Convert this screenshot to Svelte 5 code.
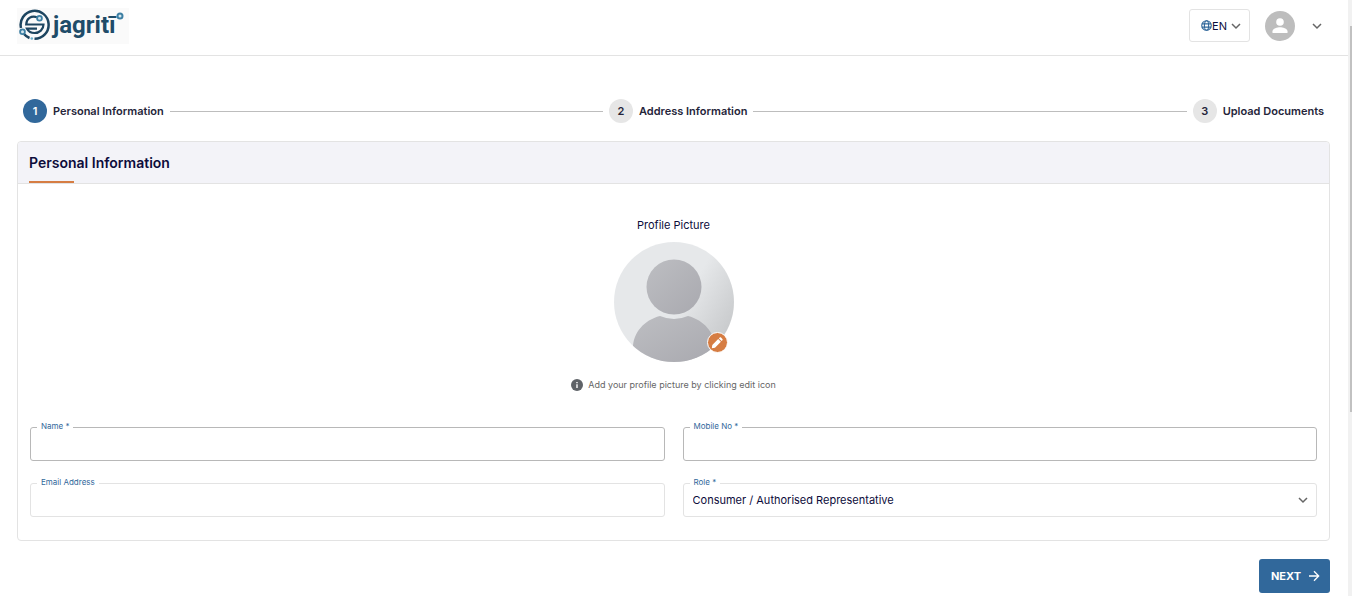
<script lang="ts">
  const steps = ["Personal Information", "Address Information", "Upload Documents"];
  const roles = ["Consumer / Authorised Representative", "Advocate", "Opposite Party"];

  let current: number = $state(0);
  let name: string = $state("");
  let mobile: string = $state("");
  let email: string = $state("");
  let role: string = $state(roles[0]);

  function next() {
    if (current < steps.length - 1) current += 1;
  }
</script>

{#snippet chevron()}
  <svg class="chevron" viewBox="0 0 10 10" aria-hidden="true">
    <path d="M1 3l4 4 4-4" fill="none" stroke="#666" stroke-width="1.5" />
  </svg>
{/snippet}

<div class="page">
  <header>
    <a class="logo" href="/">
      <svg class="mark" viewBox="0 0 32 32" aria-hidden="true">
        <g fill="none" stroke="#1d4560" stroke-width="2.5">
          <path d="M2 19A14 14 0 1 1 15.500 29.800" />
          <path d="M10.500 29A14 14 0 0 1 5 25" />
          <path d="M18 8.200C12 6.500 7.500 9.500 7.200 15.500H24.500c0 5-4 8.500-9 8.500-3.500 0-6-1.500-7.500-4.300H18" stroke-width="2.200" />
        </g>
        <circle cx="20.500" cy="9.200" r="2.400" fill="#d5e7ef" stroke="#3d7fa3" stroke-width="1.800" />
        <circle cx="3.500" cy="22.800" r="2.400" fill="#d5e7ef" stroke="#3d7fa3" stroke-width="1.800" />
        <circle cx="12.800" cy="29.500" r="1.300" fill="#6db3cf" />
      </svg>
      <span class="brand">jagritī</span>
      <svg class="dot" viewBox="0 0 8 8" aria-hidden="true">
        <circle cx="4" cy="4" r="2.500" fill="#d5e7ef" stroke="#3d7fa3" stroke-width="2" />
      </svg>
    </a>
    <div class="tools">
      <button class="lang" type="button">
        <svg class="globe" viewBox="0 0 12 12" aria-hidden="true">
          <g fill="none" stroke="#31689b" stroke-width="1.2">
            <circle cx="6" cy="6" r="5.200" />
            <ellipse cx="6" cy="6" rx="2.300" ry="5.200" />
            <path d="M1 4.200h10M1 7.800h10" />
          </g>
        </svg>
        <span>EN</span>
        {@render chevron()}
      </button>
      <button class="account" type="button" aria-label="Account">
        <svg class="avatar" viewBox="0 0 30 30" aria-hidden="true">
          <circle cx="15" cy="15" r="15" fill="#bdbdbd" />
          <circle cx="15" cy="11" r="3.800" fill="#fff" />
          <path d="M7.500 22v-1.800c0-2.500 5-3.900 7.500-3.900s7.500 1.400 7.500 3.900V22z" fill="#fff" />
        </svg>
        {@render chevron()}
      </button>
    </div>
  </header>

  <main>
    <ol class="stepper">
      {#each steps as step, i}
        {#if i > 0}
          <li class="line" aria-hidden="true"></li>
        {/if}
        <li class="step" class:active={i === current}>
          <span class="number">{i + 1}</span>
          <span class="step-label">{step}</span>
        </li>
      {/each}
    </ol>

    <form onsubmit={(e) => { e.preventDefault(); next(); }}>
      <section class="card">
        <h1><span>Personal Information</span></h1>
        <div class="body">
          <div class="profile">
            <p class="caption">Profile Picture</p>
            <div class="picture">
              <svg viewBox="0 0 120 120" aria-hidden="true">
                <defs>
                  <linearGradient id="back" x1="0" y1="0.200" x2="1" y2="0.800">
                    <stop offset="0.550" stop-color="#e6e8ea" />
                    <stop offset="1" stop-color="#c4c6c8" />
                  </linearGradient>
                  <linearGradient id="person" x1="0" y1="0" x2="1" y2="1">
                    <stop offset="0" stop-color="#bdbec2" />
                    <stop offset="1" stop-color="#a9a9af" />
                  </linearGradient>
                  <clipPath id="round"><circle cx="60" cy="60" r="60" /></clipPath>
                </defs>
                <circle cx="60" cy="60" r="60" fill="url(#back)" />
                <g clip-path="url(#round)" fill="url(#person)">
                  <circle cx="60" cy="45" r="27.500" />
                  <path d="M46 74C30 78 19 91 19 106v14h82v-14C101 91 90 78 74 74q-14 6-28 0z" />
                </g>
              </svg>
              <button class="edit" type="button" aria-label="Edit profile picture">
                <svg viewBox="0 0 14 14" aria-hidden="true">
                  <path d="M1.800 12.200l.5-3.200 5.900-5.900 2.700 2.700L5 11.700zM8.900 2.400l.8-.8c.4-.4.9-.4 1.300 0l1.400 1.400c.4.4.4.9 0 1.300l-.8.800z" fill="#fff" />
                </svg>
              </button>
            </div>
            <p class="hint">
              <svg viewBox="0 0 12 12" aria-hidden="true">
                <circle cx="6" cy="6" r="6" fill="#5f6368" />
                <path d="M5.300 5.200h1.400V9H5.300zM5.300 2.900h1.400v1.300H5.300z" fill="#fff" />
              </svg>
              Add your profile picture by clicking edit icon
            </p>
          </div>

          <div class="fields">
            <div class="field">
              <input id="name" type="text" bind:value={name} required />
              <label for="name">Name *</label>
            </div>
            <div class="field">
              <input id="mobile" type="tel" bind:value={mobile} required />
              <label for="mobile">Mobile No *</label>
            </div>
            <div class="field light">
              <input id="email" type="email" bind:value={email} />
              <label for="email">Email Address</label>
            </div>
            <div class="field light">
              <select id="role" bind:value={role}>
                {#each roles as r}
                  <option value={r}>{r}</option>
                {/each}
              </select>
              <label for="role">Role *</label>
              {@render chevron()}
            </div>
          </div>
        </div>
      </section>

      <div class="actions">
        <button class="next" type="submit">
          NEXT
          <svg viewBox="0 0 12 12" aria-hidden="true">
            <path d="M1 6h9.500M6 1.300L10.700 6 6 10.700" fill="none" stroke="#fff" stroke-width="1.300" />
          </svg>
        </button>
      </div>
    </form>
  </main>
</div>
<div class="scrollbar" aria-hidden="true"><div class="thumb"></div></div>

<style>
  :global(body) {
    background: #fff;
    overflow: hidden;
  }

  .page {
    padding-right: 4px;
    font-family: Inter, "Liberation Sans", sans-serif;
    font-size: 11px;
    color: #0d0c3b;
  }

  .page * {
    box-sizing: border-box;
  }

  button,
  input,
  select {
    font: inherit;
    color: inherit;
  }

  button {
    cursor: pointer;
  }

  header {
    display: flex;
    align-items: center;
    justify-content: space-between;
    height: 56px;
    padding: 0 26px 4px 17px;
    border-bottom: 1px solid #e3e3e3;
  }

  .logo {
    display: flex;
    align-items: center;
    height: 36px;
    padding: 0 5px 2px 2px;
    background: #fafafa;
    color: #1f4c69;
    text-decoration: none;
  }

  .mark {
    width: 32px;
    height: 32px;
  }

  .brand {
    padding-left: 2px;
    font-family: Roboto, sans-serif;
    font-size: 24px;
    font-weight: 700;
    line-height: 32px;
  }

  .dot {
    align-self: flex-start;
    width: 8px;
    height: 8px;
    margin-top: 4px;
  }

  .tools {
    display: flex;
    align-items: center;
    gap: 15px;
  }

  .lang {
    display: flex;
    align-items: center;
    height: 33px;
    padding: 0 8px 0 11px;
    border: 1px solid #e3e3e3;
    border-radius: 3px;
    background: #fff;
  }

  .globe {
    width: 11px;
    height: 11px;
  }

  .chevron {
    width: 10px;
    height: 10px;
  }

  .lang .chevron {
    margin-left: 4px;
  }

  .account {
    display: flex;
    align-items: center;
    gap: 17px;
    padding: 0;
    border: 0;
    background: none;
  }

  .avatar {
    width: 30px;
    height: 30px;
  }

  main {
    padding: 43px 18px 0 17px;
  }

  .stepper {
    display: flex;
    align-items: center;
    gap: 6px;
    margin: 0;
    padding: 0 6px;
    list-style: none;
    color: #25253a;
    font-weight: 600;
  }

  .step {
    display: flex;
    align-items: center;
    gap: 6px;
  }

  .number {
    width: 24px;
    border-radius: 50%;
    background: #e6e6e6;
    line-height: 24px;
    text-align: center;
  }

  .active .number {
    background: #31689b;
    color: #fff;
  }

  .line {
    flex: 1;
    height: 1px;
    background: #bdbdbd;
  }

  .card {
    margin-top: 18px;
    border: 1px solid #e3e3e3;
    border-radius: 4px;
  }

  h1 {
    margin: 0;
    padding: 0 11px;
    border-bottom: 1px solid #e3e3e3;
    border-radius: 4px 4px 0 0;
    background: #f3f3f8;
    font-size: 14px;
    font-weight: 600;
    line-height: 41px;
  }

  h1 span {
    display: block;
    background: linear-gradient(#d67d43, #d67d43) left bottom / 45px 2px no-repeat;
  }

  .body {
    padding: 33px 12px 23px;
  }

  .profile {
    display: flex;
    flex-direction: column;
    align-items: center;
  }

  p {
    margin: 0;
  }

  .caption {
    line-height: 16px;
  }

  .picture {
    position: relative;
    width: 120px;
    height: 120px;
    margin-top: 9px;
  }

  .edit {
    position: absolute;
    right: 6px;
    bottom: 9px;
    display: flex;
    align-items: center;
    justify-content: center;
    width: 21px;
    height: 21px;
    padding: 0;
    border: 1px solid #fff;
    border-radius: 50%;
    background: #d67d43;
  }

  .edit svg {
    width: 14px;
    height: 14px;
  }

  .hint {
    display: flex;
    align-items: center;
    gap: 5px;
    margin-top: 15px;
    color: #666;
    font-size: 9px;
    line-height: 16px;
  }

  .hint svg {
    width: 12px;
    height: 12px;
  }

  .fields {
    display: grid;
    grid-template-columns: 1fr 1fr;
    gap: 22px 18px;
    margin-top: 34px;
  }

  .field {
    position: relative;
  }

  .field input,
  .field select {
    display: block;
    width: 100%;
    height: 34px;
    padding: 0 9px;
    border: 1px solid #b8b8b8;
    border-radius: 3px;
    background: #fff;
    appearance: none;
  }

  .light input,
  .light select {
    border-color: #e3e3e3;
  }

  label {
    position: absolute;
    top: -6px;
    left: 7px;
    padding: 0 4px;
    background: #fff;
    color: #31689b;
    font-size: 8px;
    line-height: 10px;
  }

  .field .chevron {
    position: absolute;
    top: 12px;
    right: 9px;
    pointer-events: none;
  }

  .actions {
    display: flex;
    justify-content: flex-end;
    margin-top: 18px;
  }

  .next {
    display: flex;
    align-items: center;
    gap: 7px;
    height: 34px;
    padding: 0 10px 0 12px;
    border: 0;
    border-radius: 3px;
    background: #31689b;
    color: #fff;
    font-weight: 700;
  }

  .next svg {
    width: 12px;
    height: 12px;
  }

  .scrollbar {
    position: fixed;
    top: 0;
    right: 0;
    bottom: 0;
    width: 4px;
    padding: 26px 0 0 2px;
    box-sizing: border-box;
    background: #f1f1f1;
  }

  .thumb {
    height: 386px;
    background: #c1c1c1;
  }
</style>
